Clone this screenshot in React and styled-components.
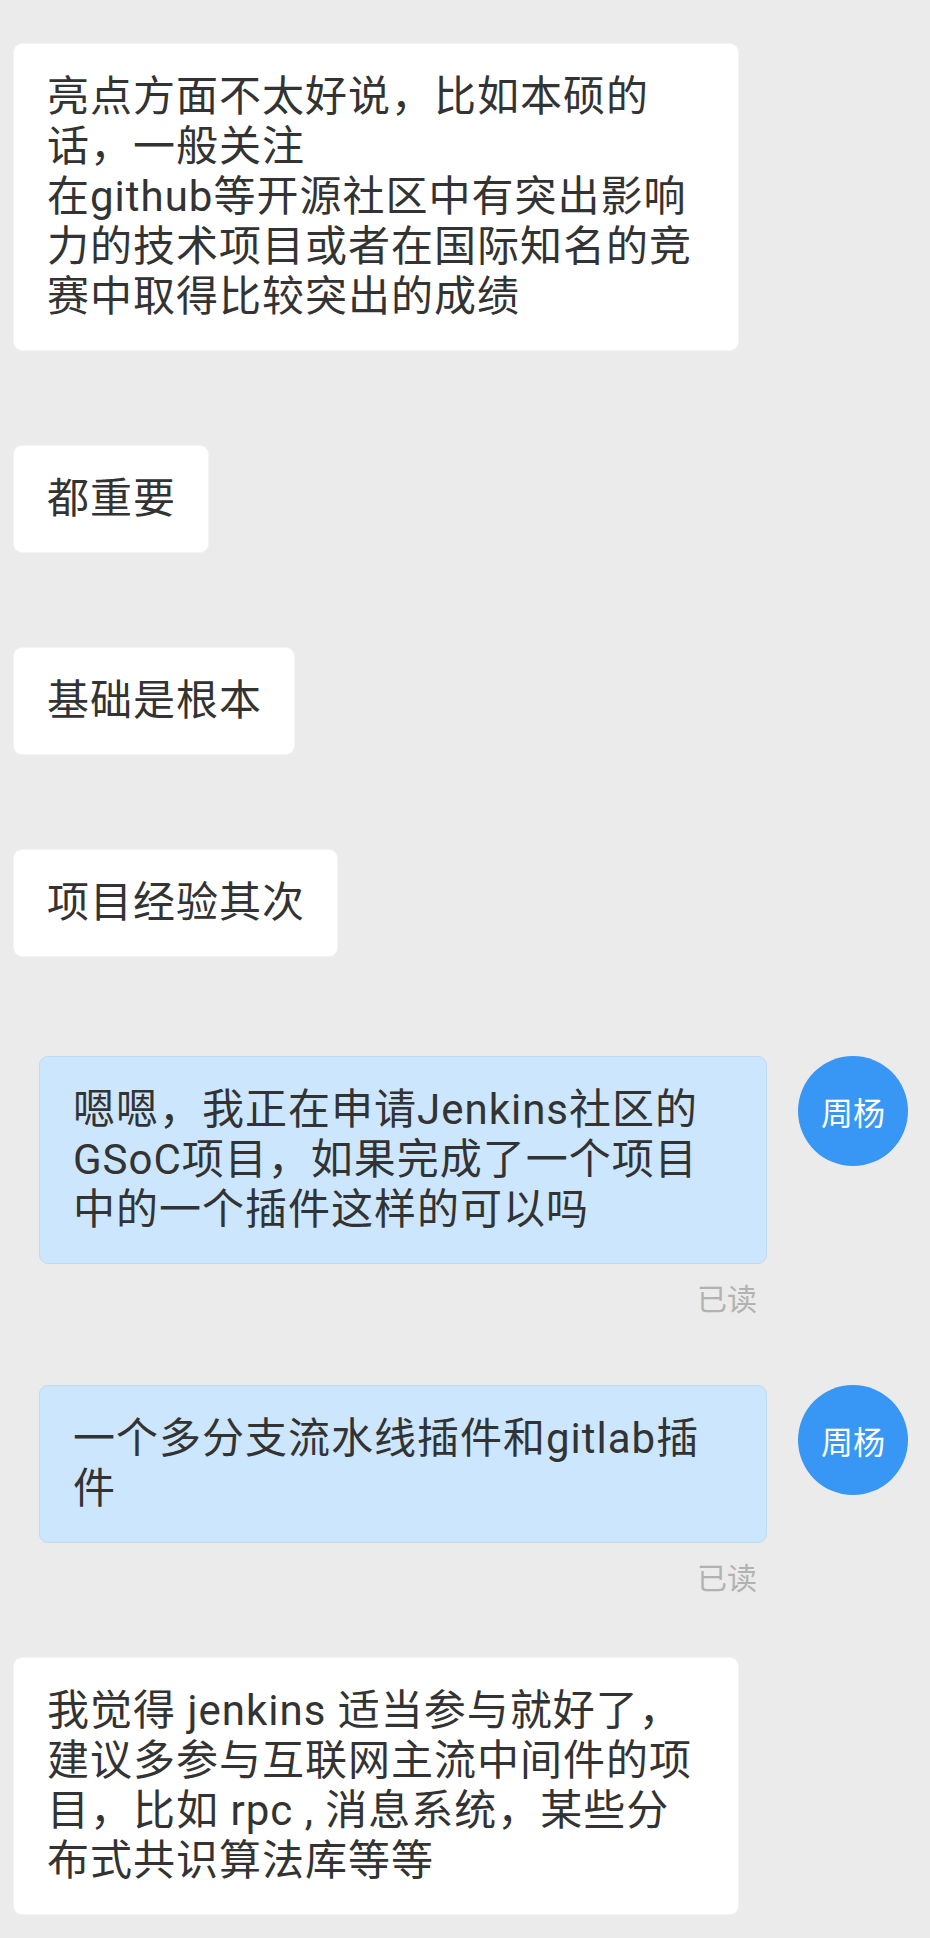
import React from "react";
import styled, { createGlobalStyle } from "styled-components";

const GlobalStyle = createGlobalStyle`
  html, body {
    margin: 0;
    padding: 0;
    background: #ebebeb;
  }
  body {
    font-family: Roboto, "Noto Sans CJK SC", "Noto Sans", sans-serif;
    -webkit-font-smoothing: antialiased;
  }
`;

const Page = styled.div`
  min-height: 1938px;
  background: #ebebeb;
  display: flex;
  flex-direction: column;
  padding-top: 43px;
  box-sizing: border-box;
`;

const IncomingRow = styled.div`
  display: flex;
  justify-content: flex-start;
  padding-left: 13px;
  margin-top: ${(p) => p.$space}px;
`;

const OutgoingRow = styled.div`
  display: flex;
  justify-content: flex-end;
  align-items: flex-start;
  gap: 31px;
  padding-right: 22px;
  margin-top: ${(p) => p.$space}px;
`;

const Stack = styled.div`
  display: flex;
  flex-direction: column;
`;

const Bubble = styled.div`
  box-sizing: border-box;
  width: ${(p) => (p.$wide ? `${p.$out ? 728 : 726}px` : "auto")};
  padding: 28px 32px 28px 33px;
  border-radius: 9px;
  background: ${(p) => (p.$out ? "#cce6fd" : "#ffffff")};
  border: 1px solid ${(p) => (p.$out ? "#bddbf5" : "#f4f4f4")};
  color: #333333;
  font-size: 42px;
  line-height: 50px;
  letter-spacing: 1px;
`;

const Line = styled.span`
  display: block;
  white-space: nowrap;
`;

const Avatar = styled.div`
  flex: none;
  width: 110px;
  height: 110px;
  border-radius: 50%;
  background: #3896f5;
  color: #ffffff;
  display: flex;
  align-items: center;
  justify-content: center;
  font-size: 32px;
`;

const Receipt = styled.div`
  align-self: flex-end;
  margin-top: 18px;
  margin-right: 10px;
  font-size: 30px;
  line-height: 36px;
  color: #b2b2b2;
`;

const messages = [
  {
    out: false,
    space: 0,
    lines: [
      "亮点方面不太好说，比如本硕的",
      "话，一般关注",
      "在github等开源社区中有突出影响",
      "力的技术项目或者在国际知名的竞",
      "赛中取得比较突出的成绩",
    ],
  },
  { out: false, space: 94, lines: ["都重要"] },
  { out: false, space: 94, lines: ["基础是根本"] },
  { out: false, space: 94, lines: ["项目经验其次"] },
  {
    out: true,
    space: 99,
    lines: [
      "嗯嗯，我正在申请Jenkins社区的",
      "GSoC项目，如果完成了一个项目",
      "中的一个插件这样的可以吗",
    ],
  },
  {
    out: true,
    space: 67,
    lines: ["一个多分支流水线插件和gitlab插", "件"],
  },
  {
    out: false,
    space: 60,
    lines: [
      "我觉得 jenkins 适当参与就好了，",
      "建议多参与互联网主流中间件的项",
      "目，比如 rpc , 消息系统，某些分",
      "布式共识算法库等等",
    ],
  },
];

function Text({ lines }) {
  return lines.map((l, i) => <Line key={i}>{l}</Line>);
}

export default function App() {
  return (
    <>
      <GlobalStyle />
      <Page>
        {messages.map((m, i) =>
          m.out ? (
            <OutgoingRow key={i} $space={m.space}>
              <Stack>
                <Bubble $out $wide={m.lines.length > 1}>
                  <Text lines={m.lines} />
                </Bubble>
                <Receipt>已读</Receipt>
              </Stack>
              <Avatar>周杨</Avatar>
            </OutgoingRow>
          ) : (
            <IncomingRow key={i} $space={m.space}>
              <Bubble $wide={m.lines.length > 1}>
                <Text lines={m.lines} />
              </Bubble>
            </IncomingRow>
          )
        )}
      </Page>
    </>
  );
}
